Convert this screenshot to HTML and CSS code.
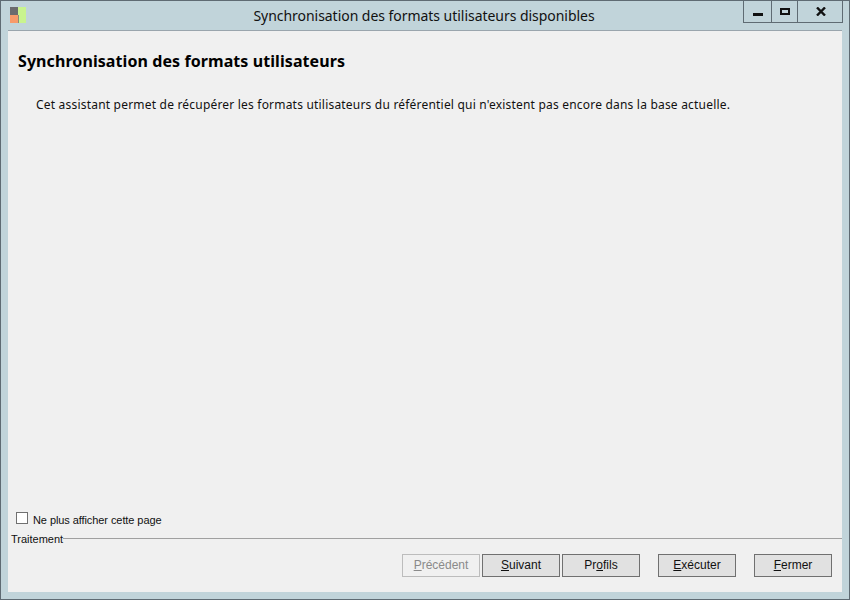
FILE: index.html
```html
<!DOCTYPE html>
<html lang="fr">
<head>
    <meta charset="UTF-8">
    <title>Synchronisation des formats utilisateurs disponibles</title>
    <link rel="stylesheet" href="styles.css">
</head>
<body>
    <div class="window">
        <div class="titlebar">
            <svg class="app-icon" width="16" height="16" viewBox="0 0 16 16">
                <rect x="0" y="0" width="8" height="8" fill="#6b6b6e"/>
                <rect x="0" y="8" width="8" height="8" fill="#f79a6a"/>
                <rect x="8" y="0" width="8" height="16" fill="#c9f48e"/>
                <rect x="8" y="8" width="1" height="8" fill="#8a8a7a"/>
            </svg>
            <div class="title">Synchronisation des formats utilisateurs disponibles</div>
            <div class="win-buttons">
                <div class="win-btn min"><svg width="10" height="3" viewBox="0 0 10 3"><rect width="10" height="3" fill="#111"/></svg></div>
                <div class="win-btn max"><svg width="10" height="7" viewBox="0 0 10 7"><rect x="1" y="1" width="8" height="5" fill="none" stroke="#111" stroke-width="2"/></svg></div>
                <div class="win-btn close"><svg width="10" height="9" viewBox="0 0 10 9"><path d="M1 0.5 L9 8.5 M9 0.5 L1 8.5" stroke="#111" stroke-width="2.4" fill="none"/></svg></div>
            </div>
        </div>

        <div class="client">
            <div class="main">
                <h1>Synchronisation des formats utilisateurs</h1>
                <p class="intro">Cet assistant permet de récupérer les formats utilisateurs du référentiel qui n'existent pas encore dans la base actuelle.</p>
            </div>

            <label class="check"><span class="box"></span>Ne plus afficher cette page</label>

            <div class="group-title"><span class="group-label">Traitement</span><div class="group-line"></div></div>

            <div class="actions">
                <button class="btn" disabled><u>P</u>récédent</button>
                <button class="btn"><u>S</u>uivant</button>
                <button class="btn">Pr<u>o</u>fils</button>
                <button class="btn gap-left"><u>E</u>xécuter</button>
                <button class="btn gap-left"><u>F</u>ermer</button>
            </div>
        </div>
    </div>
</body>
</html>
```

FILE: styles.css
```css
html, body {
    margin: 0;
    padding: 0;
    height: 100%;
}
body {
    font-family: "Noto Sans", "Open Sans", sans-serif;
    font-size: 12px;
    color: #111;
    overflow: hidden;
}
.window {
    box-sizing: border-box;
    width: 850px;
    height: 600px;
    background-color: #c1d4da;
    border: 1px solid #5f6b73;
    display: flex;
    flex-direction: column;
}
.titlebar {
    height: 29px;
    display: flex;
    align-items: flex-start;
    padding: 0 6px 0 9px;
    flex-shrink: 0;
}
.app-icon {
    margin-top: 6px;
}
.title {
    flex: 1;
    text-align: center;
    font-size: 14px;
    line-height: 30px;
    letter-spacing: -0.04px;
    padding-left: 79px;
}
.win-buttons {
    display: flex;
    height: 21px;
    border: 1px solid #5f6b73;
    border-top: none;
}
.win-btn {
    display: flex;
    align-items: center;
    justify-content: center;
    width: 25px;
    border-left: 1px solid #5f6b73;
}
.win-btn.min {
    width: 27px;
    border-left: none;
    align-items: flex-end;
    padding-bottom: 6px;
    box-sizing: border-box;
}
.win-btn.max {
    align-items: flex-start;
    padding-top: 7px;
    height: 14px;
}
.win-btn.close {
    width: 45px;
    padding-left: 1px;
    box-sizing: border-box;
}
.client {
    flex: 1;
    margin: 0 7px 7px 7px;
    background-color: #f0f0f0;
    border-top: 1px solid #9aa5ad;
    display: flex;
    flex-direction: column;
}
.main {
    flex: 1;
    padding: 19px 10px 0;
}
h1 {
    margin: 0;
    font-size: 16px;
    line-height: 22px;
    font-weight: bold;
    letter-spacing: 0.08px;
    color: #000;
}
.intro {
    margin: 24px 0 0 18px;
    line-height: 18px;
    font-size: 12px;
    letter-spacing: 0.2px;
}
.check {
    display: flex;
    align-items: center;
    margin-left: 8px;
    height: 14px;
    font-family: "Liberation Sans", sans-serif;
    font-size: 11px;
    letter-spacing: -0.08px;
}
.box {
    box-sizing: border-box;
    width: 12px;
    height: 12px;
    margin-right: 5px;
    margin-bottom: 4px;
    background-color: #fff;
    border: 1px solid #707070;
}
.group-title {
    display: flex;
    align-items: center;
    height: 14px;
    margin-top: 4px;
    margin-left: 3px;
    font-family: "Liberation Sans", sans-serif;
    font-size: 11px;
}
.group-label {
    padding-top: 2px;
}
.group-line {
    flex: 1;
    height: 1px;
    background-color: #a0a0a0;
}
.actions {
    display: flex;
    justify-content: flex-end;
    gap: 2px;
    margin-top: 9px;
    padding: 0 10px 15px 0;
}
.btn {
    box-sizing: border-box;
    width: 78px;
    height: 23px;
    padding: 0 0 2px;
    font-family: "Liberation Sans", sans-serif;
    font-size: 12px;
    color: #111;
    background-color: #e1e1e1;
    border: 1px solid #707070;
}
.btn:disabled {
    color: #8a8a8a;
    background-color: #f0f0f0;
    border-color: #bcbcbc;
}
.gap-left {
    margin-left: 16px;
}
```
